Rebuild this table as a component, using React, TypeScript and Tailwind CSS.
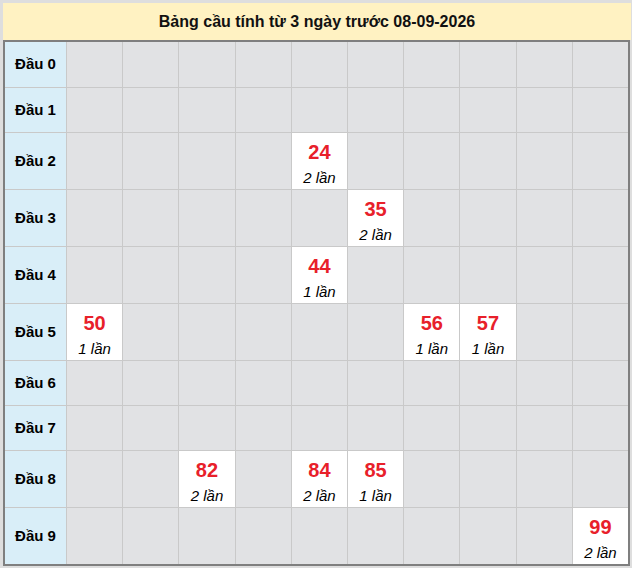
import React from "react";

const data: Record<string, { n: string; c: string }> = {
  "2-4": { n: "24", c: "2 lần" },
  "3-5": { n: "35", c: "2 lần" },
  "4-4": { n: "44", c: "1 lần" },
  "5-0": { n: "50", c: "1 lần" },
  "5-6": { n: "56", c: "1 lần" },
  "5-7": { n: "57", c: "1 lần" },
  "8-2": { n: "82", c: "2 lần" },
  "8-4": { n: "84", c: "2 lần" },
  "8-5": { n: "85", c: "1 lần" },
  "9-9": { n: "99", c: "2 lần" },
};

const rows = [0, 1, 2, 3, 4, 5, 6, 7, 8, 9];
const cols = [0, 1, 2, 3, 4, 5, 6, 7, 8, 9];
const tall = new Set([2, 3, 4, 5, 8, 9]);

export default function App() {
  return (
    <div
      className="w-[632px] h-[568px] bg-[#dedede] pt-[3px] pl-[3px] overflow-hidden"
      style={{ fontFamily: '"Liberation Sans", Arial, sans-serif' }}
    >
      <div className="w-[628px] h-[37px] bg-[#fff2c2] flex items-center justify-center text-[16px] font-bold text-[#111]">
        Bảng cầu tính từ 3 ngày trước 08-09-2026
      </div>
      <div className="w-[627px] border-2 border-[#7f7f7f] bg-[#c9c9c9]">
        <div className="grid grid-cols-[61px_repeat(10,1fr)] gap-px">
          {rows.map((r) => (
            <React.Fragment key={r}>
              <div
                className={`bg-[#d9eef8] flex items-center justify-center text-[15px] font-bold text-black ${
                  tall.has(r) ? "h-[56px]" : r === 0 ? "h-[45px]" : "h-[44px]"
                }`}
              >
                Đầu {r}
              </div>
              {cols.map((c) => {
                const d = data[`${r}-${c}`];
                return d ? (
                  <div
                    key={c}
                    className="bg-white flex flex-col items-center justify-start pt-[7px]"
                  >
                    <span className="text-[20px] font-bold text-[#e8202a] leading-[24px]">
                      {d.n}
                    </span>
                    <span className="text-[15px] italic text-black leading-[18px] mt-[5px]">
                      {d.c}
                    </span>
                  </div>
                ) : (
                  <div key={c} className="bg-[#e1e2e4]" />
                );
              })}
            </React.Fragment>
          ))}
        </div>
      </div>
    </div>
  );
}
